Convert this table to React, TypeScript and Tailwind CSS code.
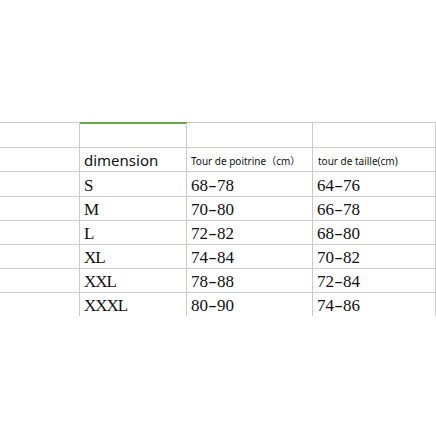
import React from "react";

const rows: [string, string, string][] = [
  ["S", "68-78", "64-76"],
  ["M", "70-80", "66-78"],
  ["L", "72-82", "68-80"],
  ["XL", "74-84", "70-82"],
  ["XXL", "78-88", "72-84"],
  ["XXXL", "80-90", "74-86"],
];

const val =
  "font-['Liberation_Serif','Noto_Sans_CJK_SC',serif] text-[17px] leading-[20px] text-[#111] whitespace-nowrap";

function Range({ v }: { v: string }) {
  const [a, b] = v.split("-");
  return (
    <span className={val}>
      {a}
      <span className="inline-block w-[9px] text-center scale-x-150">-</span>
      {b}
    </span>
  );
}

export default function App() {
  return (
    <div className="w-[436px] h-[436px] bg-white overflow-hidden pt-[122px]">
      {/* top blank row */}
      <div className="grid grid-cols-[80px_107px_126px_123px] h-[26px]">
        <div className="border-t border-b border-r border-[#cbcbcb]" />
        <div className="border-t-2 border-t-[#6aa84f] border-b border-r border-b-[#cbcbcb] border-r-[#cbcbcb]" />
        <div className="border-t border-b border-r border-[#cbcbcb]" />
        <div className="border-t border-b border-r border-[#cbcbcb]" />
      </div>
      {/* header row */}
      <div className="grid grid-cols-[80px_107px_126px_123px] h-[24px]">
        <div className="border-b border-r border-[#cbcbcb]" />
        <div className="border-b border-r border-[#cbcbcb] flex items-end pl-[4px] pb-[1px]">
          <span className="font-['Noto_Sans',sans-serif] text-[15px] leading-[20px] text-[#111]">dimension</span>
        </div>
        <div className="border-b border-r border-[#cbcbcb] flex items-end pl-[4px] pb-[4px]">
          <span className="font-['Noto_Sans','Noto_Sans_CJK_SC',sans-serif] text-[10px] leading-[12px] text-[#111] whitespace-nowrap">
            Tour de poitrine（cm）
          </span>
        </div>
        <div className="border-b border-r border-[#cbcbcb] flex items-end pl-[5px] pb-[4px]">
          <span className="font-['Noto_Sans','Noto_Sans_CJK_SC',sans-serif] text-[10px] leading-[12px] text-[#111] whitespace-nowrap">
            tour de taille(cm)
          </span>
        </div>
      </div>
      {rows.map(([s, a, b], i) => {
        const last = i === rows.length - 1;
        const rowCls = last
          ? "grid grid-cols-[80px_107px_126px_123px] h-[22px]"
          : "grid grid-cols-[80px_107px_126px_123px] h-[24px]";
        const bb = last ? "" : "border-b";
        return (
          <div key={s} className={rowCls}>
            <div className={`${bb} border-r border-[#cbcbcb]`} />
            <div className={`${bb} border-r border-[#cbcbcb] flex items-start pl-[4px] pt-[4px]`}>
              <span className={val + " tracking-[-1px]"}>{s}</span>
            </div>
            <div className={`${bb} border-r border-[#cbcbcb] flex items-start pl-[4px] pt-[4px]`}>
              <Range v={a} />
            </div>
            <div className={`${bb} border-r border-[#cbcbcb] flex items-start pl-[4px] pt-[4px]`}>
              <Range v={b} />
            </div>
          </div>
        );
      })}
    </div>
  );
}
